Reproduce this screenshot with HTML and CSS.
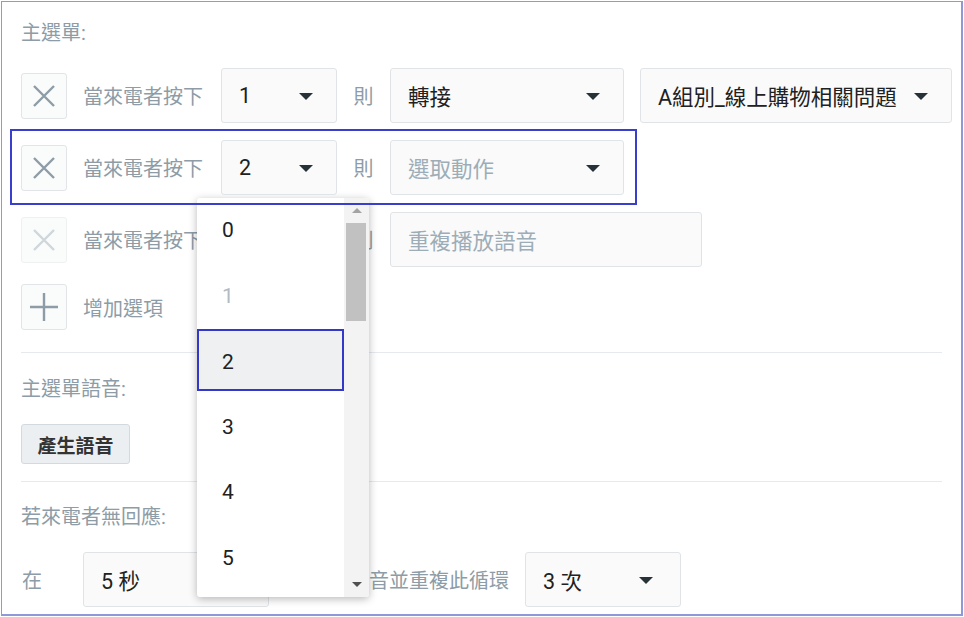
FILE: index.html
```html
<!DOCTYPE html>
<html lang="zh-Hant">
<head>
    <meta charset="UTF-8">
    <title>主選單設定</title>
    <link rel="stylesheet" href="styles.css">
</head>
<body>
    <div class="frame">
        <section class="section">
            <div class="section-title">主選單:</div>

            <div class="rule">
                <button type="button" class="icon-btn">
                    <svg width="22" height="22" viewBox="0 0 22 22"><path d="M1 1 L21 21 M21 1 L1 21"/></svg>
                </button>
                <span class="rule-label">當來電者按下</span>
                <div class="select key"><span>1</span><i class="caret"></i></div>
                <span class="rule-then">則</span>
                <div class="select action"><span>轉接</span><i class="caret"></i></div>
                <div class="select target"><span>A組別_線上購物相關問題</span><i class="caret"></i></div>
            </div>

            <div class="rule active">
                <button type="button" class="icon-btn">
                    <svg width="22" height="22" viewBox="0 0 22 22"><path d="M1 1 L21 21 M21 1 L1 21"/></svg>
                </button>
                <span class="rule-label">當來電者按下</span>
                <div class="select key"><span>2</span><i class="caret"></i></div>
                <span class="rule-then">則</span>
                <div class="select action placeholder"><span>選取動作</span><i class="caret"></i></div>
            </div>

            <div class="rule locked">
                <button type="button" class="icon-btn">
                    <svg width="22" height="22" viewBox="0 0 22 22"><path d="M1 1 L21 21 M21 1 L1 21"/></svg>
                </button>
                <span class="rule-label">當來電者按下</span>
                <div class="select key"><span>0</span><i class="caret"></i></div>
                <span class="rule-then">則</span>
                <div class="select field placeholder"><span>重複播放語音</span></div>
            </div>

            <div class="rule add">
                <button type="button" class="icon-btn">
                    <svg width="30" height="30" viewBox="0 0 30 30"><path d="M15 1 V29 M1 15 H29"/></svg>
                </button>
                <span class="rule-label">增加選項</span>
            </div>
        </section>

        <section class="section">
            <div class="section-title">主選單語音:</div>
            <button type="button" class="plain-btn">產生語音</button>
        </section>

        <section class="section">
            <div class="section-title">若來電者無回應:</div>
            <div class="rule">
                <span class="rule-first">在</span>
                <div class="select wait"><span>5 秒</span><i class="caret"></i></div>
                <span class="rule-label loop">後播放語音並重複此循環</span>
                <div class="select times"><span>3 次</span><i class="caret"></i></div>
            </div>
        </section>

        <div class="dropdown">
            <ul class="dropdown-list">
                <li>0</li>
                <li class="muted">1</li>
                <li class="current">2</li>
                <li>3</li>
                <li>4</li>
                <li>5</li>
            </ul>
            <div class="scrollbar">
                <div class="scroll-arrow up"></div>
                <div class="scroll-thumb"></div>
                <div class="scroll-space"></div>
                <div class="scroll-arrow down"></div>
            </div>
        </div>
    </div>
</body>
</html>
```

FILE: styles.css
```css
* {
    box-sizing: border-box;
}

body {
    margin: 0;
    background: #fff;
    font-family: Roboto, "Noto Sans CJK TC", sans-serif;
    color: #212121;
}

.frame {
    position: relative;
    margin: 1px 0 0 1px;
    width: 962px;
    height: 615px;
    border: 1px solid #8e9ad7;
    border-right-width: 2px;
    border-bottom-width: 2px;
    overflow: hidden;
}

.section {
    margin: 0 19px;
    padding: 21px 0 17px;
    border-top: 1px solid #e7eaec;
}

.section:first-child {
    border-top: none;
    padding-top: 17px;
    padding-bottom: 22px;
}

.section:nth-child(2) {
    padding-top: 22px;
}

.section-title {
    font-size: 20px;
    line-height: 28px;
    color: #8d9ca6;
    margin-bottom: 21px;
}

.rule {
    display: flex;
    align-items: center;
    gap: 16px;
    height: 55px;
    margin-bottom: 17px;
}

.rule > * {
    flex-shrink: 0;
}

.rule.active {
    position: relative;
    z-index: 2;
    width: fit-content;
    height: auto;
    border: 2px solid #3a3ecd;
    padding: 9px 11px 8px 9px;
    margin: -11px 0 7px -11px;
}

.rule.add {
    height: 46px;
    margin-bottom: 0;
}

.icon-btn {
    width: 46px;
    height: 46px;
    padding: 0;
    border: 1px solid #e1e5e8;
    border-radius: 3px;
    background: #fafbfb;
    display: flex;
    align-items: center;
    justify-content: center;
}

.icon-btn svg path {
    fill: none;
    stroke: #8d9ca6;
    stroke-width: 2.4;
}

.locked .icon-btn {
    border-color: #eef0f2;
}

.locked .icon-btn svg path {
    stroke: #cfd7dc;
}

.rule-label {
    width: 122px;
    font-size: 20px;
    color: #8d9ca6;
    white-space: nowrap;
}

.rule-then {
    width: 21px;
    text-align: center;
    font-size: 20px;
    color: #8d9ca6;
}

.rule-first {
    width: 46px;
    font-size: 20px;
    color: #8d9ca6;
    padding-left: 1px;
}

.rule-label.loop {
    width: auto;
    padding-left: 4px;
}

.select {
    position: relative;
    height: 55px;
    display: flex;
    align-items: center;
    padding: 0 17px;
    border: 1px solid #e0e4e7;
    border-radius: 3px;
    background: #fafafa;
    font-size: 21.5px;
    color: #212121;
    white-space: nowrap;
}

.select.placeholder {
    color: #9dadb7;
}

.caret {
    position: absolute;
    right: 23px;
    top: 50%;
    margin-top: -3px;
    width: 0;
    height: 0;
    border-left: 7px solid transparent;
    border-right: 7px solid transparent;
    border-top: 7px solid #263238;
}

.key { width: 116px; }
.action { width: 234px; }
.target { width: 312px; }
.field { width: 312px; }
.wait { width: 186px; }
.times { width: 156px; }

.times .caret {
    right: 27px;
}

.plain-btn {
    display: block;
    width: 109px;
    height: 40px;
    padding: 0;
    border: 1px solid #d3dadf;
    border-radius: 3px;
    background: #eceff1;
    font-family: Roboto, "Noto Sans CJK TC", sans-serif;
    font-size: 19px;
    font-weight: bold;
    color: #333;
}

.dropdown {
    position: absolute;
    z-index: 1;
    left: 195px;
    top: 196px;
    width: 172px;
    height: 399px;
    display: flex;
    background: #fff;
    border-radius: 3px;
    box-shadow: 0 2px 9px rgba(0, 0, 0, 0.28);
}

.dropdown-list {
    list-style: none;
    margin: 0;
    padding: 0;
    flex: 1;
}

.dropdown-list li {
    height: 65.6px;
    line-height: 65.6px;
    padding-left: 25px;
    font-size: 21px;
    color: #212121;
}

.dropdown-list li.muted {
    color: #b2bbc1;
}

.dropdown-list li.current {
    height: 62px;
    line-height: 66px;
    margin-bottom: 3.6px;
    background: #eef0f2;
    box-shadow: inset 0 0 0 2px #3438c8;
}

.scrollbar {
    width: 25px;
    display: flex;
    flex-direction: column;
    background: #f3f3f3;
    border-radius: 0 3px 3px 0;
}

.scroll-arrow {
    height: 25px;
    display: flex;
    align-items: center;
    justify-content: center;
}

.scroll-arrow::before {
    content: "";
    width: 0;
    height: 0;
    border-left: 5px solid transparent;
    border-right: 5px solid transparent;
}

.scroll-arrow.up::before {
    border-bottom: 5px solid #a3a3a3;
}

.scroll-arrow.down::before {
    border-top: 5px solid #505050;
}

.scroll-thumb {
    height: 98px;
    margin: 0 3px 0 2px;
    background: #c1c1c1;
}

.scroll-space {
    flex: 1;
}
```
